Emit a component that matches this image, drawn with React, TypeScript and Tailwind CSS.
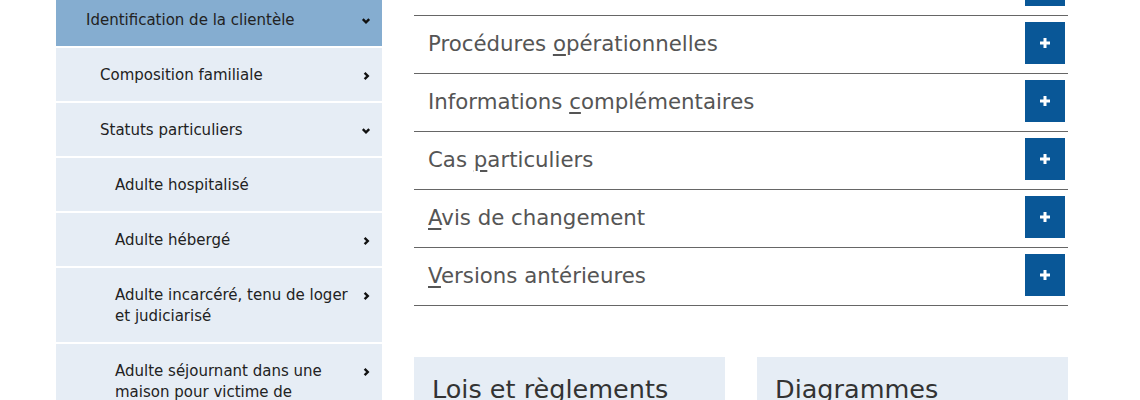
import React from 'react';

type NavItem = {
  label: React.ReactNode;
  level: 1 | 2 | 3;
  icon?: 'down' | 'right';
  active?: boolean;
};

const navItems: NavItem[] = [
  { label: 'Identification de la clientèle', level: 1, icon: 'down', active: true },
  { label: 'Composition familiale', level: 2, icon: 'right' },
  { label: 'Statuts particuliers', level: 2, icon: 'down' },
  { label: 'Adulte hospitalisé', level: 3 },
  { label: 'Adulte hébergé', level: 3, icon: 'right' },
  { label: 'Adulte incarcéré, tenu de loger et judiciarisé', level: 3, icon: 'right' },
  { label: 'Adulte séjournant dans une maison pour victime de violence conjugale', level: 3, icon: 'right' },
];

const sections = [
  { before: 'Pro', key: 'c', after: 'édures normatives' },
  { before: 'Procédures ', key: 'o', after: 'pérationnelles' },
  { before: 'Informations ', key: 'c', after: 'omplémentaires' },
  { before: 'Cas ', key: 'p', after: 'articuliers' },
  { before: '', key: 'A', after: 'vis de changement' },
  { before: '', key: 'V', after: 'ersions antérieures' },
];

function Chevron({ dir }: { dir: 'down' | 'right' }) {
  return (
    <svg width="10" height="10" viewBox="0 0 10 10" className="shrink-0">
      {dir === 'down' ? (
        <path d="M1.8 3.2 L5 6.4 L8.2 3.2" fill="none" stroke="#111" strokeWidth="2.4" />
      ) : (
        <path d="M3.6 1.8 L6.8 5 L3.6 8.2" fill="none" stroke="#111" strokeWidth="2.4" />
      )}
    </svg>
  );
}

function Plus() {
  return (
    <svg width="12" height="12" viewBox="0 0 12 12">
      <path d="M6 1 V11 M1 6 H11" stroke="#fff" strokeWidth="3" />
    </svg>
  );
}

export default function App() {
  return (
    <div className="h-[400px] w-[1140px] overflow-hidden bg-white font-['DejaVu_Sans',Verdana,sans-serif]">
      <div className="flex gap-[32px] pl-[56px]">
        {/* menu latéral */}
        <nav className="-mt-[7px] flex w-[326px] shrink-0 flex-col gap-[2px]">
          {navItems.map((item, i) => (
            <div
              key={i}
              className={
                'flex items-start pt-[17px] pb-[15px] pr-[11px] text-[15px] leading-[21px] text-[#222] ' +
                (item.active ? 'bg-[#85add0] ' : 'bg-[#e6edf5] ') +
                (item.level === 1 ? 'pl-[30px]' : item.level === 2 ? 'pl-[44px]' : 'pl-[59px]')
              }
            >
              <span className="flex-1 pr-[6px]">{item.label}</span>
              {item.icon && (
                <span className="flex h-[21px] items-center">
                  <Chevron dir={item.icon} />
                </span>
              )}
            </div>
          ))}
        </nav>

        {/* contenu */}
        <main className="w-[654px] shrink-0">
          <div className="-mt-[42px]">
            {sections.map((s, i) => (
              <div
                key={i}
                className="flex items-center justify-between border-b border-[#666] pt-[6px] pb-[9px] pl-[14px] pr-[3px]"
              >
                <span className="mt-[2px] text-[21.3px] text-[#555]">
                  {s.before}
                  <span className="underline underline-offset-[3px]">{s.key}</span>
                  {s.after}
                </span>
                <button className="flex h-[42px] w-[40px] items-center justify-center bg-[#095797]">
                  <Plus />
                </button>
              </div>
            ))}
          </div>

          <div className="mt-[51px] grid grid-cols-2 gap-[32px]">
            <div className="h-[80px] bg-[#e6edf5] px-[18px] pt-[13px]">
              <h2 className="text-[25.5px] text-[#333]">Lois et règlements</h2>
            </div>
            <div className="h-[80px] bg-[#e6edf5] px-[18px] pt-[13px]">
              <h2 className="text-[25.5px] text-[#333]">Diagrammes</h2>
            </div>
          </div>
        </main>
      </div>
    </div>
  );
}
